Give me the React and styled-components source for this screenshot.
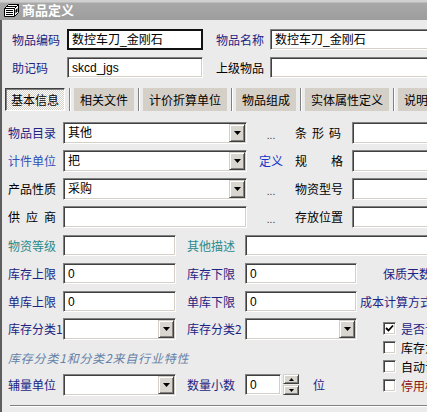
import React from 'react';
import styled, { createGlobalStyle, css } from 'styled-components';

const Global = createGlobalStyle`
  html, body { margin: 0; padding: 0; background: #ebebeb; }
  body {
    font-family: "Liberation Sans", "Noto Sans CJK SC", sans-serif;
    font-size: 12px;
    overflow: hidden;
  }
  * { box-sizing: border-box; }
`;

const NAVY = '#1d2383';
const BLUE = '#2f50b8';
const TEAL = '#2a8a8c';
const LINK = '#1733cc';
const RED = '#8e1212';

const Window = styled.div`
  width: 427px;
  height: 412px;
  overflow: hidden;
  display: flex;
  flex-direction: column;
  background: #ebebeb;
`;

const TitleBar = styled.div`
  flex: none;
  height: 20px;
  display: flex;
  align-items: center;
  gap: 2px;
  padding-left: 3px;
  background: linear-gradient(#d0d0d0 0, #d0d0d0 2px, #a8a8a8 3px, #9d9d9d 100%);
  color: #fff;
  font-weight: bold;
  font-size: 13px;
  font-family: "Noto Sans CJK SC", sans-serif;
  line-height: 16px;
`;

const Body = styled.div`
  flex: 1;
  display: flex;
  flex-direction: column;
  padding-top: 9px;
  border-left: 2px solid #5e5e5e;
`;

const Row = styled.div`
  flex: none;
  display: flex;
  align-items: center;
  height: ${p => p.$h || 22}px;
  margin-top: ${p => p.$mt || 0}px;
`;

const Label = styled.span`
  flex: none;
  width: ${p => p.$w}px;
  margin-left: ${p => p.$ml || 0}px;
  color: ${p => p.$c || '#000'};
  letter-spacing: ${p => p.$ls || 0}px;
  white-space: nowrap;
  line-height: 14px;
  font-family: "Noto Sans CJK SC", sans-serif;
  font-size: 12px;
`;

const sunken = css`
  background: #fff;
  border: 1px solid;
  border-color: #808080 #ffffff #ffffff #808080;
  box-shadow: inset 1px 1px #404040, inset -1px -1px #d4d0c8;
`;

const raised = css`
  background: #d9d6d0;
  border: 1px solid;
  border-color: #d4d0c8 #404040 #404040 #d4d0c8;
  box-shadow: inset 1px 1px #ffffff, inset -1px -1px #808080;
`;

const Field = styled.div`
  ${sunken};
  flex: none;
  width: ${p => p.$w}px;
  height: ${p => p.$h || 22}px;
  margin-left: ${p => p.$ml || 0}px;
  display: flex;
  align-items: center;
  padding-left: 4px;
  color: #000;
  white-space: nowrap;
  overflow: hidden;
  line-height: 14px;
  ${p => p.$focus && css`
    border: 2px solid #111;
    box-shadow: none;
    padding-left: 3px;
  `}
`;

const DropBtn = styled.div`
  ${raised};
  flex: none;
  margin-left: auto;
  margin-right: 1px;
  width: 16px;
  height: 18px;
  display: flex;
  align-items: center;
  justify-content: center;
`;

const Mid = styled.span`
  flex: none;
  width: 48px;
  text-align: center;
  color: ${p => p.$link ? LINK : '#444'};
  font-family: "Noto Sans CJK SC", sans-serif;
  font-size: ${p => p.$link ? 12 : 10}px;
  line-height: 14px;
  padding-top: ${p => p.$link ? 0 : 3}px;
`;

const Tabs = styled.div`
  flex: none;
  display: flex;
  align-items: stretch;
  height: 23px;
  margin-top: 10px;
  margin-left: 3px;
`;

const Tab = styled.div`
  flex: none;
  display: flex;
  align-items: center;
  padding: 0 6px;
  background: #d4d0c8;
  color: #000;
  font-family: "Noto Sans CJK SC", sans-serif;
  white-space: nowrap;
  ${p => p.$active && css`
    padding: 0 5px;
    background: repeating-conic-gradient(#ffffff 0 25%, #d4d0c8 0 50%) 0 0 / 2px 2px;
    border: 1px solid;
    border-color: #404040 #ffffff #ffffff #404040;
    box-shadow: inset 1px 1px #808080;
  `}
`;

const TabSep = styled.div`
  flex: none;
  width: 2px;
  margin: 0 3px 0 4px;
  border-left: 1px solid #808080;
  border-right: 1px solid #ffffff;
`;

const Lower = styled.div`
  flex: none;
  display: flex;
  margin-top: 6px;
`;

const LeftCol = styled.div`
  flex: none;
  width: 381px;
  display: flex;
  flex-direction: column;
`;

const Note = styled.div`
  flex: none;
  height: 34px;
  display: flex;
  align-items: center;
  margin-left: 6px;
  color: #6581a8;
  font-style: italic;
  letter-spacing: 0.8px;
  font-family: "Noto Sans CJK SC", sans-serif;
`;

const RightCol = styled.div`
  flex: none;
  display: flex;
  flex-direction: column;
  padding-top: 4px;
  gap: 6px;
`;

const CheckRow = styled.div`
  display: flex;
  align-items: center;
  height: 13px;
  gap: 5px;
  white-space: nowrap;
  color: ${p => p.$c || '#000'};
  font-family: "Noto Sans CJK SC", sans-serif;
  line-height: 14px;
`;

const Box = styled.div`
  ${sunken};
  flex: none;
  width: 13px;
  height: 13px;
  display: flex;
  align-items: center;
  justify-content: center;
`;

const Spin = styled.div`
  flex: none;
  display: flex;
  flex-direction: column;
  gap: 1px;
  margin-left: 2px;
  height: 21px;
`;

const SpinBtn = styled.div`
  ${raised};
  width: 16px;
  height: 10px;
  display: flex;
  align-items: center;
  justify-content: center;
`;

const Rule = styled.div`
  flex: none;
  margin-top: 10px;
  margin-left: 8px;
  height: 2px;
  border-top: 1px solid #808080;
  border-bottom: 1px solid #ffffff;
`;

const Tri = ({ up, w = 7, h = 4 }) => (
  <svg width={w} height={h} viewBox={`0 0 ${w} ${h}`}>
    <polygon points={up ? `0,${h} ${w},${h} ${w / 2},0` : `0,0 ${w},0 ${w / 2},${h}`} fill="#000" />
  </svg>
);

const Select = ({ w, children, ml }) => (
  <Field $w={w} $ml={ml}>
    {children}
    <DropBtn><Tri /></DropBtn>
  </Field>
);

const Check = () => (
  <svg width="9" height="9" viewBox="0 0 9 9">
    <path d="M1 4 L3.5 6.5 L8 1.5" fill="none" stroke="#000" strokeWidth="1.8" />
  </svg>
);

const AppIcon = () => (
  <svg width="17" height="16" viewBox="0 0 17 16">
    <path d="M1.5 6.5 L5.5 2.5 H15.5 V10.5 L11.5 14.5 H1.5 Z" fill="#fff" stroke="#000" />
    <path d="M1.5 6.5 H11.5 V14.5 M11.5 6.5 L15.5 2.5" fill="none" stroke="#000" />
    <path d="M4 4.5 H13 M3 8.5 H10 M3 10.5 H10 M3 12.5 H10" stroke="#000" />
    <path d="M12.5 8 L14.5 6 V9.5 L12.5 11.5 Z" fill="#000" />
  </svg>
);

export default function App() {
  return (
    <>
      <Global />
      <Window>
        <TitleBar>
          <AppIcon />
          <span>商品定义</span>
        </TitleBar>
        <Body>
          <Row $h={21}>
            <Label $ml={10} $w={55} $c={NAVY}>物品编码</Label>
            <Field $w={136} $h={21} $focus>数控车刀_金刚石</Field>
            <Label $ml={13} $w={54} $c={NAVY}>物品名称</Label>
            <Field $w={170} $h={21}>数控车刀_金刚石</Field>
          </Row>
          <Row $h={21} $mt={7}>
            <Label $ml={10} $w={55} $c={NAVY}>助记码</Label>
            <Field $w={136} $h={21}>skcd_jgs</Field>
            <Label $ml={13} $w={54}>上级物品</Label>
            <Field $w={170} $h={21} />
          </Row>

          <Tabs>
            <Tab $active>基本信息</Tab>
            <TabSep />
            <Tab>相关文件</Tab>
            <TabSep />
            <Tab>计价折算单位</Tab>
            <TabSep />
            <Tab>物品组成</Tab>
            <TabSep />
            <Tab>实体属性定义</Tab>
            <TabSep />
            <Tab>说明</Tab>
          </Tabs>

          <Row $mt={11}>
            <Label $ml={6} $w={55} $c={NAVY}>物品目录</Label>
            <Select w={184}>其他</Select>
            <Mid>...</Mid>
            <Label $w={57} $ls={5}>条形码</Label>
            <Field $w={90} />
          </Row>
          <Row $mt={6}>
            <Label $ml={6} $w={55} $c={BLUE}>计件单位</Label>
            <Select w={184}>把</Select>
            <Mid $link>定义</Mid>
            <Label $w={57}>规　　格</Label>
            <Field $w={90} />
          </Row>
          <Row $mt={6}>
            <Label $ml={6} $w={55}>产品性质</Label>
            <Select w={184}>采购</Select>
            <Mid>...</Mid>
            <Label $w={57}>物资型号</Label>
            <Field $w={90} />
          </Row>
          <Row $mt={6}>
            <Label $ml={6} $w={55} $ls={6}>供应商</Label>
            <Field $w={184} />
            <Mid>...</Mid>
            <Label $w={57}>存放位置</Label>
            <Field $w={90} />
          </Row>
          <Row $mt={7} $h={21}>
            <Label $ml={6} $w={55} $c={TEAL}>物资等级</Label>
            <Field $w={113} $h={21} />
            <Label $ml={11} $w={58} $c={TEAL}>其他描述</Label>
            <Field $w={200} $h={21} />
          </Row>
          <Row $mt={7} $h={21}>
            <Label $ml={6} $w={55} $c={NAVY}>库存上限</Label>
            <Field $w={113} $h={21}>0</Field>
            <Label $ml={11} $w={58} $c={NAVY}>库存下限</Label>
            <Field $w={112} $h={21}>0</Field>
            <Label $ml={26} $w={60} $c={NAVY}>保质天数</Label>
          </Row>
          <Row $mt={7} $h={21}>
            <Label $ml={6} $w={55} $c={NAVY}>单库上限</Label>
            <Field $w={113} $h={21}>0</Field>
            <Label $ml={11} $w={58} $c={NAVY}>单库下限</Label>
            <Field $w={112} $h={21}>0</Field>
            <Label $ml={3} $w={80} $c={NAVY}>成本计算方式</Label>
          </Row>

          <Lower>
            <LeftCol>
              <Row>
                <Label $ml={6} $w={55} $c={NAVY}>库存分类1</Label>
                <Select w={113} />
                <Label $ml={11} $w={58} $c={NAVY}>库存分类2</Label>
                <Select w={112} />
              </Row>
              <Note>库存分类1和分类2来自行业特性</Note>
              <Row $h={21}>
                <Label $ml={6} $w={55} $c={NAVY}>辅量单位</Label>
                <Select w={113} />
                <Label $ml={11} $w={58} $c={NAVY}>数量小数</Label>
                <Field $w={36} $h={21}>0</Field>
                <Spin>
                  <SpinBtn><Tri up w={5} h={3} /></SpinBtn>
                  <SpinBtn><Tri w={5} h={3} /></SpinBtn>
                </Spin>
                <Label $ml={14} $w={20} $c={NAVY}>位</Label>
              </Row>
            </LeftCol>
            <RightCol>
              <CheckRow $c={NAVY}><Box><Check /></Box>是否计算</CheckRow>
              <CheckRow><Box />库存为零</CheckRow>
              <CheckRow><Box />自动计算</CheckRow>
              <CheckRow $c={RED}><Box />停用标志</CheckRow>
            </RightCol>
          </Lower>
          <Rule />
        </Body>
      </Window>
    </>
  );
}
